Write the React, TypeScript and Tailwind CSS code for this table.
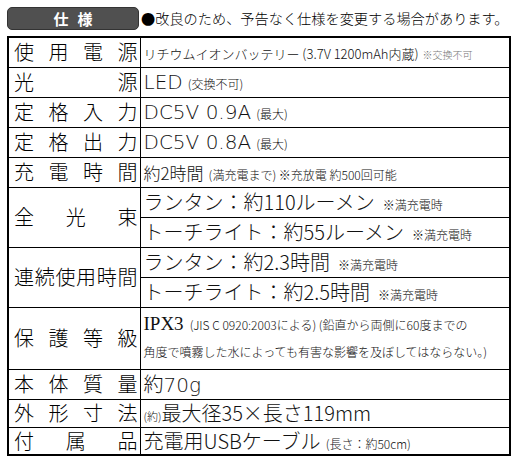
import React from 'react';

const cell = 'border border-black p-0';
const jp = "font-['Noto_Sans_CJK_JP',sans-serif]";

function Label({ text, rows }: { text: string; rows?: number }) {
  return (
    <td rowSpan={rows} className={`${cell} w-[132px] pl-[5px] pr-[2px] align-middle`}>
      <div className={`flex justify-between text-[20px] leading-none text-black ${jp}`}>
        {text.split('').map((c, i) => (
          <span key={i}>{c}</span>
        ))}
      </div>
    </td>
  );
}

export default function App() {
  return (
    <div className="w-[519px] h-[465px] bg-white pl-[7px] pt-[7px] font-['DejaVu_Sans','Noto_Sans_CJK_JP',sans-serif] text-[#111]">
      {/* Header */}
      <div className="flex items-center gap-[2px]">
        <div className="w-[132px] h-[23px] rounded-[5px] bg-[#505050] border border-[#333] flex items-center justify-center">
          <span className={`text-white font-bold text-[15px] leading-none tracking-[0.6em] pl-[0.6em] ${jp}`}>仕様</span>
        </div>
        <span className={`text-[14.2px] leading-none text-black font-light ${jp}`}>●改良のため、予告なく仕様を変更する場合があります。</span>
      </div>

      {/* Spec table */}
      <table className="mt-[6px] w-[504px] border-collapse border-2 border-black leading-none font-light">
        <tbody>
          <tr className="h-[30px]">
            <Label text="使用電源" />
            <td className={`${cell} pl-[3px] ${jp}`}>
              <span className="text-[13px]">リチウムイオンバッテリー (3.7V 1200mAh内蔵)</span>
              <span className="text-[10px] text-[#777] ml-[4px]">※交換不可</span>
            </td>
          </tr>
          <tr className="h-[30px]">
            <Label text="光源" />
            <td className={`${cell} pl-[3px]`}>
              <span className="text-[20px]">LED</span>
              <span className={`text-[12px] ml-[5px] ${jp}`}>(交換不可)</span>
            </td>
          </tr>
          <tr className="h-[30px]">
            <Label text="定格入力" />
            <td className={`${cell} pl-[3px]`}>
              <span className="text-[20px]">DC5V 0.9A</span>
              <span className={`text-[12px] ml-[5px] ${jp}`}>(最大)</span>
            </td>
          </tr>
          <tr className="h-[30px]">
            <Label text="定格出力" />
            <td className={`${cell} pl-[3px]`}>
              <span className="text-[20px]">DC5V 0.8A</span>
              <span className={`text-[12px] ml-[5px] ${jp}`}>(最大)</span>
            </td>
          </tr>
          <tr className="h-[30px]">
            <Label text="充電時間" />
            <td className={`${cell} pl-[3px] ${jp}`}>
              <span className="text-[17px]">約2時間</span>
              <span className="text-[12px] ml-[5px]">(満充電まで) ※充放電 約500回可能</span>
            </td>
          </tr>
          <tr className="h-[30px]">
            <Label text="全光束" rows={2} />
            <td className={`${cell} pl-[3px] ${jp}`}>
              <span className="text-[20px]">ランタン：約110ルーメン</span>
              <span className="text-[12px] ml-[8px]">※満充電時</span>
            </td>
          </tr>
          <tr className="h-[30px]">
            <td className={`${cell} pl-[3px] ${jp}`}>
              <span className="text-[20px]">トーチライト：約55ルーメン</span>
              <span className="text-[12px] ml-[8px]">※満充電時</span>
            </td>
          </tr>
          <tr className="h-[30px]">
            <Label text="連続使用時間" rows={2} />
            <td className={`${cell} pl-[3px] ${jp}`}>
              <span className="text-[20px]">ランタン：約2.3時間</span>
              <span className="text-[12px] ml-[8px]">※満充電時</span>
            </td>
          </tr>
          <tr className="h-[30px]">
            <td className={`${cell} pl-[3px] ${jp}`}>
              <span className="text-[20px]">トーチライト：約2.5時間</span>
              <span className="text-[12px] ml-[8px]">※満充電時</span>
            </td>
          </tr>
          <tr className="h-[62px]">
            <Label text="保護等級" />
            <td className={`${cell} pl-[3px] ${jp}`}>
              <div className="flex items-baseline h-[28px] pt-[6px]">
                <span className="text-[19px] font-normal font-['Liberation_Serif',serif]">IPX3</span>
                <span className="text-[12px] ml-[6px]">(JIS C 0920:2003による) (鉛直から両側に60度までの</span>
              </div>
              <div className="text-[12px] h-[32px] pt-[10px]">角度で噴霧した水によっても有害な影響を及ぼしてはならない。)</div>
            </td>
          </tr>
          <tr className="h-[30px]">
            <Label text="本体質量" />
            <td className={`${cell} pl-[3px]`}>
              <span className={`text-[20px] ${jp}`}>約</span>
              <span className="text-[20px]">70g</span>
            </td>
          </tr>
          <tr className="h-[28px]">
            <Label text="外形寸法" />
            <td className={`${cell} pl-[3px] ${jp}`}>
              <span className="text-[11px]">(約)</span>
              <span className="text-[20px]">最大径35×長さ119mm</span>
            </td>
          </tr>
          <tr className="h-[28px]">
            <Label text="付属品" />
            <td className={`${cell} pl-[3px] ${jp}`}>
              <span className="text-[20px]">充電用USBケーブル</span>
              <span className="text-[12px] ml-[5px]">(長さ：約50cm)</span>
            </td>
          </tr>
        </tbody>
      </table>
    </div>
  );
}
